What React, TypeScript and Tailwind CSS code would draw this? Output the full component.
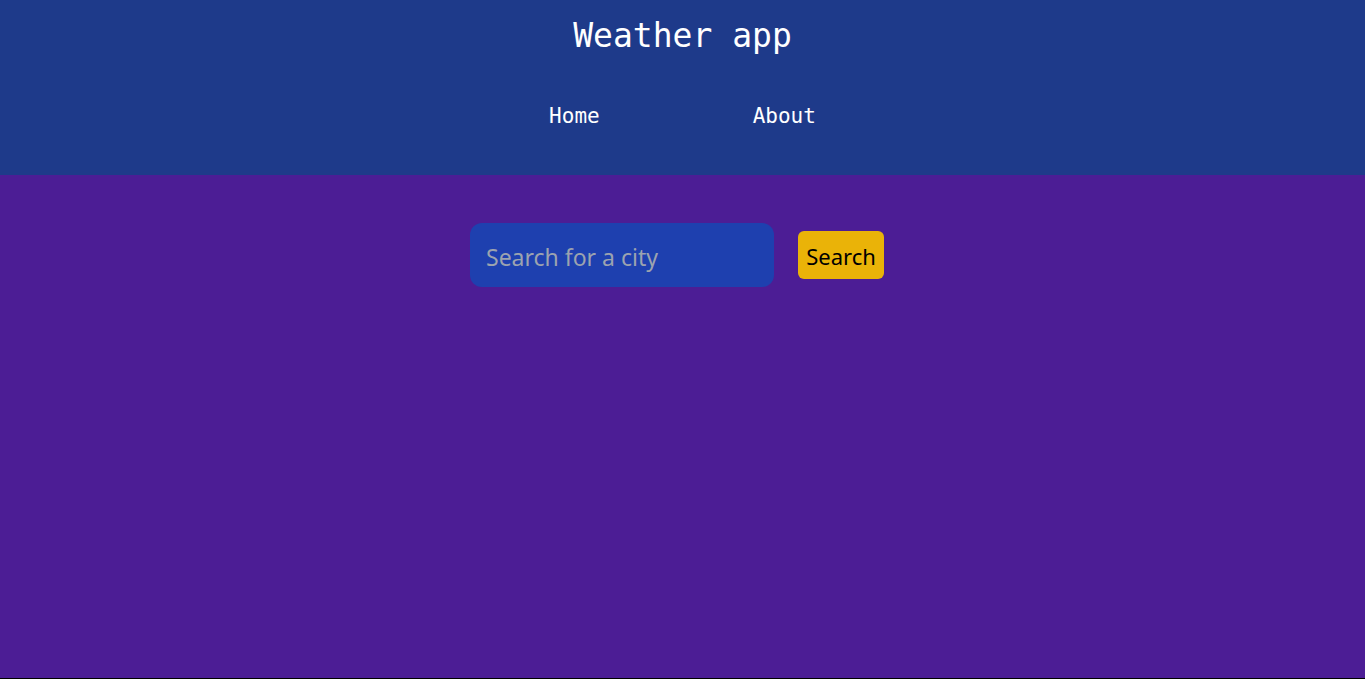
import { useState } from "react";

const NAV_LINKS = ["Home", "About"];

export default function App() {
  const [city, setCity] = useState("");

  return (
    <div className="h-[679px] bg-black">
      <div className="flex h-[678px] flex-col bg-[#4c1d95]">
        {/* Header */}
        <header className="h-[175px] bg-[#1e3a8a] pt-[14px] text-white font-['DejaVu_Sans_Mono',monospace]">
          <h1 className="text-center text-[33px] leading-[44px]">Weather app</h1>
          <nav className="mt-[44px] flex justify-center gap-[153px] text-[21px] leading-[28px]">
            {NAV_LINKS.map((label) => (
              <a key={label} href="#" className="text-white no-underline">
                {label}
              </a>
            ))}
          </nav>
        </header>

        {/* Search */}
        <main className="flex items-center justify-center gap-6 pt-12 pr-[11px] font-['Noto_Sans',sans-serif]">
          <input
            value={city}
            onChange={(e) => setCity(e.target.value)}
            placeholder="Search for a city"
            className="h-16 w-[304px] rounded-xl bg-[#1e40af] px-4 pt-[3px] text-[23px] text-white placeholder:text-[#9ca3af] outline-none"
          />
          <button className="h-12 w-[86px] rounded-md bg-[#eab308] pt-[2px] text-[22px] text-black">
            Search
          </button>
        </main>
      </div>
    </div>
  );
}
